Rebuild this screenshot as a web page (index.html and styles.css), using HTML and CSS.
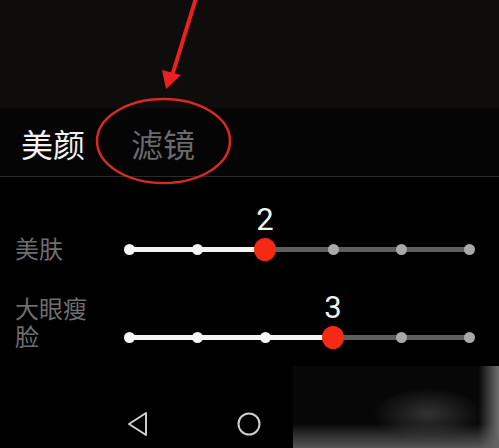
FILE: index.html
```html
<!DOCTYPE html>
<html lang="zh">
<head>
<meta charset="utf-8">
<link rel="stylesheet" href="styles.css">
</head>
<body>
<div class="page">
  <div class="preview"></div>
  <div class="tabs">
    <span class="tab active">美颜</span>
    <span class="tab">滤镜</span>
  </div>
  <div class="panel">
    <div class="row">
      <div class="label">美肤</div>
      <div class="slider" style="--pct:40%">
        <span class="dot on"></span><span class="dot on"></span>
        <span class="dot thumb"><b class="val">2</b></span>
        <span class="dot"></span><span class="dot"></span><span class="dot"></span>
      </div>
    </div>
    <div class="row second">
      <div class="label">大眼瘦脸</div>
      <div class="slider" style="--pct:60%">
        <span class="dot on"></span><span class="dot on"></span><span class="dot on"></span>
        <span class="dot thumb"><b class="val">3</b></span>
        <span class="dot"></span><span class="dot"></span>
      </div>
    </div>
  </div>
  <div class="nav">
    <svg class="nav-icon back" width="24" height="26" viewBox="0 0 24 26"><path d="M20 2 L20 24 L3 13 Z" fill="none" stroke="#cfcfcf" stroke-width="2" stroke-linejoin="round"/></svg>
    <svg class="nav-icon home" width="26" height="26" viewBox="0 0 26 26"><circle cx="13" cy="13" r="10.5" fill="none" stroke="#cfcfcf" stroke-width="2"/></svg>
  </div>
  <div class="blur"></div>
  <svg class="annot" width="499" height="448" viewBox="0 0 499 448">
    <line x1="196" y1="-2" x2="172" y2="76" stroke="#e8231f" stroke-width="4" stroke-linecap="round"/>
    <path d="M166 89 L162 70 L181 75 Z" fill="#e8231f"/>
    <ellipse cx="163.5" cy="141" rx="66.5" ry="42" fill="none" stroke="#d62a26" stroke-width="2.5"/>
  </svg>
</div>
</body>
</html>
```

FILE: styles.css
```css
* { box-sizing: border-box; }
html, body { margin: 0; padding: 0; background: #000; }
.page {
  position: relative;
  width: 499px;
  height: 448px;
  overflow: hidden;
  background: #000;
  font-family: "Noto Sans CJK SC", "Noto Sans", sans-serif;
}
.preview {
  height: 108px;
  background: #0f0c0c;
}
.tabs {
  height: 69px;
  background: #050505;
  border-bottom: 1px solid #2b2b2b;
  display: flex;
  align-items: center;
  gap: 46px;
  padding-left: 21px;
  padding-top: 2px;
}
.tab {
  font-size: 32px;
  line-height: 40px;
  color: #6b6b6b;
}
.tab.active { color: #f2f2f2; }
.panel {
  padding-top: 58px;
  display: flex;
  flex-direction: column;
  gap: 32px;
}
.row {
  display: flex;
  align-items: flex-end;
}
.label {
  width: 118px;
  padding-left: 15px;
  padding-right: 26px;
  font-size: 24px;
  line-height: 28px;
  color: #6e6e6e;
  position: relative;
  top: -1px;
}
.slider {
  position: relative;
  width: 362px;
  height: 28px;
  display: flex;
  justify-content: space-between;
  align-items: center;
}
.slider::before {
  content: "";
  position: absolute;
  left: 11px;
  right: 11px;
  top: 11.5px;
  height: 5px;
  background: linear-gradient(to right, #f4f4f4 var(--pct), #5e5e5e var(--pct));
}
.dot {
  position: relative;
  width: 22px;
  height: 22px;
  display: flex;
  justify-content: center;
  align-items: center;
}
.dot::after {
  content: "";
  width: 11px;
  height: 11px;
  border-radius: 50%;
  background: #a9a9a9;
}
.dot.on::after { background: #f6f6f6; }
.dot.thumb::after {
  width: 23px;
  height: 23px;
  background: #f42a14;
}
.val {
  position: absolute;
  left: 50%;
  top: -36px;
  transform: translateX(-50%);
  font-family: Roboto, "Noto Sans", sans-serif;
  font-weight: 400;
  font-size: 31px;
  line-height: 36px;
  color: #f2f2f2;
}
.nav {
  display: flex;
  align-items: center;
  padding-top: 60px;
  padding-left: 126px;
  gap: 86px;
}
.blur {
  position: absolute;
  left: 293px;
  top: 366px;
  width: 206px;
  height: 82px;
  background:
    radial-gradient(ellipse 55px 26px at 135px 48px, rgba(80,80,80,0.6), rgba(80,80,80,0) 100%),
    linear-gradient(to bottom, rgba(0,0,0,0) 70%, rgba(100,100,100,0.85) 100%),
    linear-gradient(to right, rgba(0,0,0,0) 90%, rgba(130,130,130,0.85) 100%),
    #070707;
}
.annot {
  position: absolute;
  left: 0;
  top: 0;
  pointer-events: none;
}
```
